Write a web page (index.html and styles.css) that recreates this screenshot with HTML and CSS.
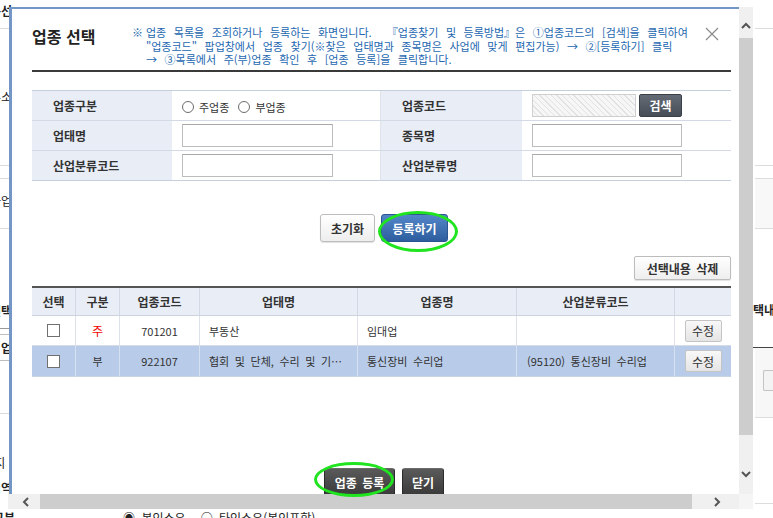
FILE: index.html
```html
<!DOCTYPE html>
<html lang="ko">
<head>
<meta charset="utf-8">
<title>업종 선택</title>
<link rel="stylesheet" href="styles.css">
</head>
<body>
<div class="page">
  <div class="bg-left">
    <div class="bl r1"><b>구분선</b></div>
    <div class="bl r2">주소</div>
    <div class="bl r3"></div>
    <div class="bl r4">사업</div>
    <div class="bl r5"><b>업종선택</b></div>
    <div class="bl r6"><span class="bl-box"><b>업</b></span></div>
    <div class="bl r7"><span>소재지 :</span><b class="bl-last">지역</b></div>
  </div>
  <div class="bg-mid"></div>
  <div class="bg-right">
    <div class="br q1"></div>
    <div class="br q2"></div>
    <div class="br q3"></div>
    <div class="br q4"></div>
    <div class="br q5"><b>택내용 삭제</b></div>
    <div class="br q6"><span class="br-btn"></span></div>
    <div class="br q7"></div>
  </div>
  <div class="bg-bottom"><b class="bb-label">구분</b><span class="bb-radios">◉ 본인소유</span><span class="bb-radios2">○ 타인소유(본인포함)</span></div>
</div>

<div class="modal">
  <div class="view">
    <div class="head">
      <h1 class="title">업종 선택</h1>
      <p class="notice"><span class="kome">※</span>업종 목록을 조회하거나 등록하는 화면입니다.&nbsp; 『업종찾기 및 등록방법』은 ①업종코드의 [검색]을 클릭하여<br>"업종코드" 팝업창에서 업종 찾기(※찾은 업태명과 종목명은 사업에 맞게 편집가능) → ②[등록하기] 클릭<br>→ ③목록에서 주(부)업종 확인 후 [업종 등록]을 클릭합니다.</p>
      <span class="close"><svg width="14" height="14" viewBox="0 0 14 14"><path d="M1 1 L13 13 M13 1 L1 13" stroke="#8c8c8c" stroke-width="1.2" fill="none"/></svg></span>
    </div>

    <div class="form">
      <div class="fl">업종구분</div>
      <div class="fv fv1">
        <span class="radio"><span class="rd"></span>주업종</span>
        <span class="radio"><span class="rd"></span>부업종</span>
      </div>
      <div class="fl">업종코드</div>
      <div class="fv"><span class="inp inp-code"></span><span class="btn-search">검색</span></div>

      <div class="fl">업태명</div>
      <div class="fv fv1"><input class="inp" type="text"></div>
      <div class="fl">종목명</div>
      <div class="fv"><input class="inp" type="text"></div>

      <div class="fl">산업분류코드</div>
      <div class="fv fv1"><input class="inp" type="text"></div>
      <div class="fl">산업분류명</div>
      <div class="fv"><input class="inp" type="text"></div>
    </div>

    <div class="btn-row">
      <span class="btn btn-white btn-reset">초기화</span>
      <span class="btn btn-blue">등록하기</span>
    </div>

    <div class="del-row">
      <span class="btn btn-white btn-del">선택내용 삭제</span>
    </div>

    <div class="list">
      <div class="trow thead">
        <div class="tc">선택</div>
        <div class="tc">구분</div>
        <div class="tc">업종코드</div>
        <div class="tc">업태명</div>
        <div class="tc">업종명</div>
        <div class="tc">산업분류코드</div>
        <div class="tc"></div>
      </div>
      <div class="trow tbody r-a">
        <div class="tc ctr"><span class="chk"></span></div>
        <div class="tc ctr red">주</div>
        <div class="tc ctr">701201</div>
        <div class="tc lft">부동산</div>
        <div class="tc lft">임대업</div>
        <div class="tc lft2"></div>
        <div class="tc ctr"><span class="btn-edit">수정</span></div>
      </div>
      <div class="trow tbody r-b">
        <div class="tc ctr"><span class="chk"></span></div>
        <div class="tc ctr">부</div>
        <div class="tc ctr">922107</div>
        <div class="tc lft">협회 및 단체, 수리 및 기⋯</div>
        <div class="tc lft">통신장비 수리업</div>
        <div class="tc lft2">(95120) 통신장비 수리업</div>
        <div class="tc ctr"><span class="btn-edit">수정</span></div>
      </div>
    </div>

    <div class="foot-row">
      <span class="btn btn-dark btn-reg">업종 등록</span>
      <span class="btn btn-dark btn-close">닫기</span>
    </div>
  </div>

  <div class="vscroll">
    <div class="vs-up"><svg width="10" height="7" viewBox="0 0 10 7"><polyline points="1,6 5,2 9,6" fill="none" stroke="#555" stroke-width="2"/></svg></div>
    <div class="vs-thumb"></div>
    <div class="vs-down"><svg width="10" height="7" viewBox="0 0 10 7"><polyline points="1,1 5,5 9,1" fill="none" stroke="#555" stroke-width="2"/></svg></div>
  </div>
  <div class="hscroll">
    <div class="hs-left"><svg width="7" height="10" viewBox="0 0 7 10"><polyline points="6,1 2,5 6,9" fill="none" stroke="#555" stroke-width="2"/></svg></div>
    <div class="hs-thumb"></div>
    <div class="hs-right"><svg width="7" height="10" viewBox="0 0 7 10"><polyline points="1,1 5,5 1,9" fill="none" stroke="#555" stroke-width="2"/></svg></div>
  </div>
  <div class="corner"></div>
</div>

<div class="mark mark-add"></div>
<div class="mark mark-reg"></div>
</body>
</html>
```

FILE: styles.css
```css
* { box-sizing: border-box; }
html, body { margin: 0; padding: 0; }
body {
  width: 773px;
  height: 518px;
  overflow: hidden;
  position: relative;
  background: #fff;
  font-family: "Noto Sans CJK KR", "Noto Sans", sans-serif;
  font-size: 12px;
  color: #333;
}

/* ---------- background page ---------- */
.page {
  display: grid;
  grid-template-columns: 12px 1fr 20px;
  grid-template-rows: 509px 9px;
  height: 518px;
}
.bg-left { display: flex; flex-direction: column; }
.bl {
  display: flex;
  justify-content: flex-end;
  border-bottom: 1px solid #dcdcdc;
  line-height: 14px;
  white-space: nowrap;
  color: #222;
}
.r1 { height: 29px; align-items: flex-start; padding-top: 4px; }
.r2 { height: 137px; align-items: center; }
.r3 { height: 13px; }
.r4 { height: 50px; align-items: center; padding-bottom: 6px; }
.r5 { height: 100px; align-items: flex-end; padding-bottom: 10px; border-bottom-color: #9a9a9a; }
.r6 { height: 85px; align-items: flex-start; padding-top: 5px; }
.bl-box {
  display: flex; align-items: center;
  height: 27px;
  border-top: 1px solid #bdbdbd;
  border-bottom: 1px solid #bdbdbd;
  padding-left: 6px;
}
.r7 {
  flex: 1;
  flex-direction: column;
  justify-content: flex-start;
  align-items: flex-end;
  padding-top: 42px;
  border-bottom: 0;
}
.bl-last { margin-top: 11px; }

.bg-right { display: flex; flex-direction: column; padding-left: 2px; }
.br { border-bottom: 1px solid #dcdcdc; white-space: nowrap; overflow: hidden; }
.q1 { height: 29px; }
.q2 { height: 137px; }
.q3 { height: 13px; }
.q4 { height: 50px; background: #f8f8f8; }
.q5 { height: 119px; display: flex; align-items: flex-end; padding-bottom: 30px; line-height: 14px; border-bottom-color: #444; margin-left: -2px; color: #222; }
.q6 { height: 70px; background: #f7f7f7; padding: 22px 0 0 8px; }
.br-btn { display: block; height: 21px; border: 1px solid #c4c4c4; border-right: 0; border-radius: 2px 0 0 2px; background: #f3f3f3; }
.q7 { height: 86px; }

.bg-bottom {
  grid-column: 1 / -1;
  display: flex;
  line-height: 18px;
  white-space: nowrap;
  color: #222;
  word-spacing: 3px;
}
.bb-label { margin-left: -7px; }
.bb-radios { margin-left: 108px; }
.bb-radios2 { margin-left: 15px; }

/* ---------- modal window ---------- */
.modal {
  position: absolute;
  left: 9px;
  top: 7px;
  width: 744px;
  height: 502px;
  display: grid;
  grid-template-columns: 730px 14px;
  grid-template-rows: 487px 15px;
  background: #f0f0f0;
}
.view {
  border-top: 2px solid #7496c6;
  border-left: 3px solid #7496c6;
  background: #fff;
  overflow: hidden;
  padding: 0 8px 0 20px;
}

.head {
  display: flex;
  align-items: flex-start;
  padding-top: 17px;
  padding-bottom: 3.5px;
  border-bottom: 2px solid #3a3a3a;
}
.title {
  margin: 0;
  width: 100px;
  flex: none;
  font-size: 16px;
  line-height: 20px;
  font-weight: 700;
  color: #222;
}
.notice {
  margin: 0;
  flex: 1;
  font-size: 11px;
  line-height: 13.5px;
  color: #2467b0;
  white-space: nowrap;
  word-spacing: 4.5px;
  padding-left: 14px;
  text-indent: -14px;
}
.kome { display: inline-block; width: 14px; text-indent: 0; }
.close { flex: none; width: 14px; height: 14px; margin: 1px 12px 0 0; display: flex; }

/* form */
.form {
  margin-top: 18px;
  display: grid;
  grid-template-columns: 140px 209px 141px 209px;
  grid-auto-rows: 30px;
  border-top: 1px solid #c6cfdd;
}
.fl {
  display: flex;
  align-items: center;
  padding-left: 21px;
  background: #e8edf6;
  border-bottom: 1px solid #d3dae6;
  font-weight: 700;
  color: #333;
}
.fv {
  display: flex;
  align-items: center;
  padding-left: 10px;
  border-bottom: 1px solid #d3dae6;
}
.fv1 { border-right: 1px solid #dfe4ec; }
.form > div:nth-last-child(-n+4) { border-bottom-color: #c6cfdd; }

.radio { display: flex; align-items: center; font-size: 11px; margin-right: 9px; color: #333; padding-top: 3px; }
.rd {
  width: 12px; height: 12px;
  border: 1px solid #6c6c6c;
  border-radius: 50%;
  background: #fff;
  margin-right: 5px;
}
.inp {
  display: block;
  width: 151px;
  height: 23px;
  border: 1px solid #bdbdbd;
  border-top-color: #a9a9a9;
  background: #fff;
  padding: 0;
  margin: 0;
  font: inherit;
  outline: none;
}
.fv:nth-child(4n) .inp { width: 150px; }
.fv .inp.inp-code {
  width: 104px;
  border-color: #cfcfcf;
  background: repeating-linear-gradient(45deg, #f6f6f6 0 3px, #e2e2e2 3px 4px);
}
.btn-search {
  display: flex;
  align-items: center;
  justify-content: center;
  width: 43px;
  height: 23px;
  margin-left: 3px;
  border: 1px solid #3b4048;
  border-radius: 2px;
  background: linear-gradient(#646b75, #474d56);
  color: #fff;
  font-weight: 700;
}

/* buttons */
.btn {
  display: flex;
  align-items: center;
  justify-content: center;
  font-weight: 700;
  border-radius: 3px;
}
.btn-row {
  margin-top: 33px;
  display: flex;
  justify-content: center;
  gap: 6px;
  padding-left: 5px;
}
.btn-white {
  border: 1px solid #bcbcbc;
  background: linear-gradient(#ffffff, #eeeeee);
  color: #333;
  box-shadow: 0 1px 1px rgba(0,0,0,0.12);
}
.btn-reset { width: 55px; height: 28px; }
.btn-blue {
  width: 67px; height: 28px;
  border: 1px solid #2a5490;
  background: linear-gradient(#5386c8, #2d5d9f);
  color: #fff;
}
.del-row { margin-top: 14px; display: flex; justify-content: flex-end; }
.btn-del { width: 97px; height: 24px; border-radius: 2px; word-spacing: 2px; }

/* list */
.list { margin-top: 6px; border-top: 2px solid #555; }
.trow {
  display: grid;
  grid-template-columns: 44px 44px 80px 158px 159px 158px 56px;
}
.tc {
  display: flex;
  align-items: center;
  border-right: 1px solid #dde2ea;
  border-bottom: 1px solid #d6dce6;
  white-space: nowrap;
  overflow: hidden;
}
.tc:last-child { border-right: 0; }
.thead { height: 28px; background: #e9eef6; }
.thead .tc { justify-content: center; font-weight: 700; border-right-color: #d2d9e4; border-bottom-color: #cbd3df; }
.tbody { font-size: 11px; color: #333; word-spacing: 2.5px; }
.r-a { height: 30px; background: #fff; }
.r-b { height: 31px; background: #b8cce9; }
.r-b .tc { border-right-color: #d5e0f0; border-bottom-color: #c9d4e3; }
.ctr { justify-content: center; }
.lft { padding-left: 9px; }
.lft2 { padding-left: 10px; }
.red { color: #f00000; font-size: 12px; }
.chk { width: 13px; height: 13px; border: 1px solid #707070; background: #fff; }
.btn-edit {
  display: flex; align-items: center; justify-content: center;
  width: 37px; height: 22px;
  border: 1px solid #c4c4c4;
  border-radius: 2px;
  background: linear-gradient(#f8f8f8, #e5e5e5);
  font-size: 12px;
  color: #333;
}

.foot-row {
  margin-top: 91px;
  display: flex;
  justify-content: center;
  gap: 7px;
  padding-left: 5px;
}
.btn-dark {
  height: 28px;
  border: 1px solid #2b2b2b;
  border-top-color: #6a6a6a;
  background: linear-gradient(#5a5a5a, #3a3a3a);
  color: #fff;
}
.btn-reg { width: 71px; word-spacing: 2px; }
.btn-close { width: 42px; }

/* scrollbars */
.vscroll { display: flex; flex-direction: column; background: #f0f0f0; }
.vs-up { height: 31px; display: flex; justify-content: center; padding-top: 15px; }
.vs-thumb { height: 397px; background: #cdcdcd; }
.vs-down { flex: 1; display: flex; justify-content: center; padding-top: 36px; }
.hscroll { display: flex; background: #f0f0f0; margin-left: -1px; }
.hs-left { width: 32px; display: flex; align-items: center; justify-content: center; padding-left: 2px; }
.hs-thumb { width: 652px; background: #cdcdcd; }
.hs-right { flex: 1; display: flex; align-items: center; justify-content: center; padding-left: 4px; }
.corner { background: #f5f5f5; }

/* annotation ellipses */
.mark {
  position: absolute;
  border: 3px solid #1fe41f;
  border-radius: 50%;
  pointer-events: none;
}
.mark-add { left: 378px; top: 211px; width: 80px; height: 41px; }
.mark-reg { left: 314px; top: 462px; width: 80px; height: 35px; }
```
